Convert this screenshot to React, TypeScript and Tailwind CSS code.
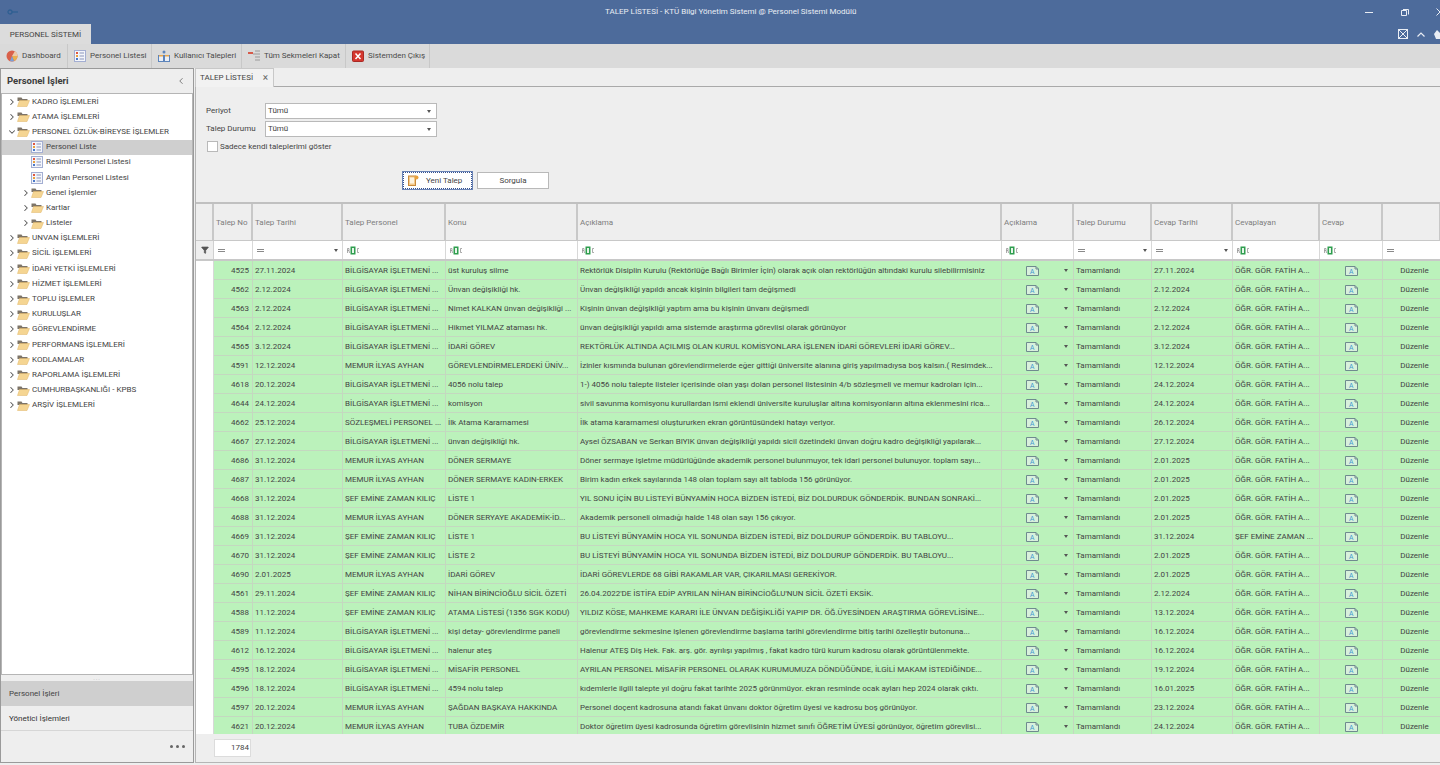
import { ChevronRight, ChevronDown, ChevronLeft, Filter } from "lucide-react"

const rows = [
  ["4525", "27.11.2024", "BİLGİSAYAR İŞLETMENİ ...", "üst kuruluş silme", "Rektörlük Disiplin Kurulu (Rektörlüğe Bağlı Birimler İçin) olarak açık olan rektörlüğün altındaki kurulu silebilirmisiniz", "27.11.2024", "ÖĞR. GÖR. FATİH A..."],
  ["4562", "2.12.2024", "BİLGİSAYAR İŞLETMENİ ...", "Ünvan değişikliği hk.", "Ünvan değişikliği yapıldı ancak kişinin bilgileri tam değişmedi", "2.12.2024", "ÖĞR. GÖR. FATİH A..."],
  ["4563", "2.12.2024", "BİLGİSAYAR İŞLETMENİ ...", "Nimet KALKAN ünvan değişikliği ...", "Kişinin ünvan değişikliği yaptım ama bu kişinin ünvanı değişmedi", "2.12.2024", "ÖĞR. GÖR. FATİH A..."],
  ["4564", "2.12.2024", "BİLGİSAYAR İŞLETMENİ ...", "Hikmet YILMAZ ataması hk.", "ünvan değişikliği yapıldı ama sistemde araştırma görevlisi olarak görünüyor", "2.12.2024", "ÖĞR. GÖR. FATİH A..."],
  ["4565", "3.12.2024", "BİLGİSAYAR İŞLETMENİ ...", "İDARİ GÖREV", "REKTÖRLÜK ALTINDA AÇILMIŞ OLAN KURUL KOMİSYONLARA İŞLENEN İDARİ GÖREVLERİ İDARİ GÖREV...", "3.12.2024", "ÖĞR. GÖR. FATİH A..."],
  ["4591", "12.12.2024", "MEMUR İLYAS AYHAN", "GÖREVLENDİRMELERDEKİ ÜNİV...", "İzinler kısmında bulunan görevlendirmelerde eğer gittiği üniversite alanına giriş yapılmadıysa boş kalsın.( Resimdek...", "12.12.2024", "ÖĞR. GÖR. FATİH A..."],
  ["4618", "20.12.2024", "BİLGİSAYAR İŞLETMENİ ...", "4056 nolu talep", "1-) 4056 nolu talepte listeler içerisinde olan yaşı dolan personel listesinin 4/b sözleşmeli ve memur kadroları için...", "24.12.2024", "ÖĞR. GÖR. FATİH A..."],
  ["4644", "24.12.2024", "BİLGİSAYAR İŞLETMENİ ...", "komisyon", "sivil savunma komisyonu kurullardan ismi eklendi üniversite kuruluşlar altına komisyonların altına eklenmesini rica...", "24.12.2024", "ÖĞR. GÖR. FATİH A..."],
  ["4662", "25.12.2024", "SÖZLEŞMELİ PERSONEL ...", "İlk Atama Kararnamesi", "İlk atama kararnamesi oluştururken ekran görüntüsündeki hatayı veriyor.", "26.12.2024", "ÖĞR. GÖR. FATİH A..."],
  ["4667", "27.12.2024", "BİLGİSAYAR İŞLETMENİ ...", "ünvan değişikliği hk.", "Aysel ÖZSABAN ve Serkan BIYIK ünvan değişikliği yapıldı sicil özetindeki ünvan doğru kadro değişikliği yapılarak...", "27.12.2024", "ÖĞR. GÖR. FATİH A..."],
  ["4686", "31.12.2024", "MEMUR İLYAS AYHAN", "DÖNER SERMAYE", "Döner sermaye işletme müdürlüğünde akademik personel bulunmuyor, tek idari personel bulunuyor. toplam sayı...", "2.01.2025", "ÖĞR. GÖR. FATİH A..."],
  ["4687", "31.12.2024", "MEMUR İLYAS AYHAN", "DÖNER SERMAYE KADIN-ERKEK", "Birim kadın erkek sayılarında 148 olan toplam sayı alt tabloda 156 görünüyor.", "2.01.2025", "ÖĞR. GÖR. FATİH A..."],
  ["4668", "31.12.2024", "ŞEF EMİNE ZAMAN KILIÇ", "LİSTE 1", "YIL SONU İÇİN BU LİSTEYİ BÜNYAMİN HOCA BİZDEN İSTEDİ, BİZ DOLDURDUK GÖNDERDİK. BUNDAN SONRAKİ...", "2.01.2025", "ÖĞR. GÖR. FATİH A..."],
  ["4688", "31.12.2024", "MEMUR İLYAS AYHAN", "DÖNER SERYAYE AKADEMİK-İD...", "Akademik personeli olmadığı halde 148 olan sayı 156 çıkıyor.", "2.01.2025", "ÖĞR. GÖR. FATİH A..."],
  ["4669", "31.12.2024", "ŞEF EMİNE ZAMAN KILIÇ", "LİSTE 1", "BU LİSTEYİ BÜNYAMİN HOCA YIL SONUNDA BİZDEN İSTEDİ, BİZ DOLDURUP GÖNDERDİK.  BU TABLOYU...", "31.12.2024", "ŞEF EMİNE ZAMAN ..."],
  ["4670", "31.12.2024", "ŞEF EMİNE ZAMAN KILIÇ", "LİSTE 2", "BU LİSTEYİ BÜNYAMİN HOCA YIL SONUNDA BİZDEN İSTEDİ, BİZ DOLDURUP GÖNDERDİK.  BU TABLOYU...", "2.01.2025", "ÖĞR. GÖR. FATİH A..."],
  ["4690", "2.01.2025", "MEMUR İLYAS AYHAN", "İDARİ GÖREV", "İDARİ GÖREVLERDE 68 GİBİ RAKAMLAR VAR, ÇIKARILMASI GEREKİYOR.", "2.01.2025", "ÖĞR. GÖR. FATİH A..."],
  ["4561", "29.11.2024", "ŞEF EMİNE ZAMAN KILIÇ", "NİHAN BİRİNCİOĞLU SİCİL ÖZETİ", "26.04.2022'DE İSTİFA EDİP AYRILAN NİHAN BİRİNCİOĞLU'NUN SİCİL ÖZETİ EKSİK.", "2.12.2024", "ÖĞR. GÖR. FATİH A..."],
  ["4588", "11.12.2024", "ŞEF EMİNE ZAMAN KILIÇ", "ATAMA LİSTESİ (1356 SGK KODU)", "YILDIZ KÖSE, MAHKEME KARARI İLE ÜNVAN DEĞİŞİKLİĞİ YAPIP DR. ÖĞ.ÜYESİNDEN ARAŞTIRMA GÖREVLİSİNE...", "13.12.2024", "ÖĞR. GÖR. FATİH A..."],
  ["4589", "11.12.2024", "BİLGİSAYAR İŞLETMENİ ...", "kişi detay- görevlendirme paneli", "görevlendirme sekmesine işlenen görevlendirme başlama tarihi görevlendirme bitiş tarihi özelleştir butonuna...", "16.12.2024", "ÖĞR. GÖR. FATİH A..."],
  ["4612", "16.12.2024", "BİLGİSAYAR İŞLETMENİ ...", "halenur ateş", "Halenur ATEŞ Diş Hek. Fak. arş. gör. ayrılışı yapılmış , fakat kadro türü kurum kadrosu olarak görüntülenmekte.", "16.12.2024", "ÖĞR. GÖR. FATİH A..."],
  ["4595", "18.12.2024", "BİLGİSAYAR İŞLETMENİ ...", "MİSAFİR PERSONEL", "AYRILAN PERSONEL MİSAFİR PERSONEL OLARAK KURUMUMUZA DÖNDÜĞÜNDE, İLGİLİ MAKAM İSTEDİĞİNDE...", "19.12.2024", "ÖĞR. GÖR. FATİH A..."],
  ["4596", "18.12.2024", "BİLGİSAYAR İŞLETMENİ ...", "4594 nolu talep", "kıdemlerle ilgili talepte yıl doğru fakat tarihte 2025 görünmüyor. ekran resminde ocak ayları hep 2024 olarak çıktı.", "16.01.2025", "ÖĞR. GÖR. FATİH A..."],
  ["4597", "20.12.2024", "MEMUR İLYAS AYHAN", "ŞAĞDAN BAŞKAYA HAKKINDA", "Personel doçent kadrosuna atandı fakat ünvanı doktor öğretim üyesi ve kadrosu boş görünüyor.", "23.12.2024", "ÖĞR. GÖR. FATİH A..."],
  ["4621", "20.12.2024", "MEMUR İLYAS AYHAN", "TUBA ÖZDEMİR", "Doktor öğretim üyesi kadrosunda öğretim görevlisinin hizmet sınıfı ÖĞRETİM ÜYESİ görünüyor, öğretim görevlisi...", "24.12.2024", "ÖĞR. GÖR. FATİH A..."],
]

const tree = [
  { label: "KADRO İŞLEMLERİ", level: 0, kind: "closed" },
  { label: "ATAMA İŞLEMLERİ", level: 0, kind: "closed" },
  { label: "PERSONEL ÖZLÜK-BİREYSE İŞLEMLER", level: 0, kind: "open" },
  { label: "Personel Liste", level: 1, kind: "list", selected: true },
  { label: "Resimli Personel Listesi", level: 1, kind: "list" },
  { label: "Ayrılan Personel Listesi", level: 1, kind: "list" },
  { label: "Genel İşlemler", level: 1, kind: "closed" },
  { label: "Kartlar", level: 1, kind: "closed" },
  { label: "Listeler", level: 1, kind: "closed" },
  { label: "UNVAN İŞLEMLERİ", level: 0, kind: "closed" },
  { label: "SİCİL İŞLEMLERİ", level: 0, kind: "closed" },
  { label: "İDARİ YETKİ İŞLEMLERİ", level: 0, kind: "closed" },
  { label: "HİZMET İŞLEMLERİ", level: 0, kind: "closed" },
  { label: "TOPLU İŞLEMLER", level: 0, kind: "closed" },
  { label: "KURULUŞLAR", level: 0, kind: "closed" },
  { label: "GÖREVLENDİRME", level: 0, kind: "closed" },
  { label: "PERFORMANS İŞLEMLERİ", level: 0, kind: "closed" },
  { label: "KODLAMALAR", level: 0, kind: "closed" },
  { label: "RAPORLAMA İŞLEMLERİ", level: 0, kind: "closed" },
  { label: "CUMHURBAŞKANLIĞI - KPBS", level: 0, kind: "closed" },
  { label: "ARŞİV İŞLEMLERİ", level: 0, kind: "closed" },
]

const gridCols = "grid grid-cols-[18px_39px_90px_103px_132px_424px_72px_78px_81px_87px_63px_58px]"

function FolderIcon() {
  return (
    <svg width="13" height="11" viewBox="0 0 13 11" className="shrink-0">
      <path d="M0.5 1.5h4l1 1.5h5v2h-10z" fill="#7d7468" />
      <path d="M0.5 10.5l2-6h10l-2.5 6z" fill="#f5d592" stroke="#e0b566" strokeWidth="0.5" />
    </svg>
  )
}

function ListIcon() {
  return (
    <svg width="12" height="12" viewBox="0 0 12 12" className="shrink-0">
      <rect x="0.5" y="0.5" width="11" height="11" fill="#f4f6fb" stroke="#a3aed2" />
      <rect x="2" y="2" width="2" height="2" fill="#e0563f" />
      <rect x="2" y="5" width="2" height="2" fill="#e8a03c" />
      <rect x="2" y="8" width="2" height="2" fill="#4a78c8" />
      <path d="M5.5 3h4.5M5.5 6h4.5M5.5 9h4.5" stroke="#8a95bb" />
    </svg>
  )
}

function FilterAbc() {
  return (
    <svg width="13" height="9" viewBox="0 0 13 9">
      <path d="M0.5 7V2.5h1.5v2H0.5M2 4.5l0.5 2.5" stroke="#888" strokeWidth="0.7" fill="none" />
      <rect x="3.5" y="0.5" width="5" height="8" fill="#2f9e4f" />
      <rect x="5" y="2" width="2" height="5" fill="#e8f5ea" />
      <path d="M12 2.5h-1.5v4H12" stroke="#888" strokeWidth="0.7" fill="none" />
    </svg>
  )
}

function MemoIcon() {
  return (
    <svg width="13" height="10" viewBox="0 0 13 10" className="shrink-0">
      <path d="M0.5 0.5h9.5l2.5 2.5v6.5h-12z" fill="#d8f0dc" stroke="#6f8a8f" />
      <path d="M10 0.5v2.5h2.5" fill="none" stroke="#6f8a8f" />
      <text x="4" y="7.5" fontSize="6.5" fill="#3f9bd0" fontFamily="'Liberation Sans', sans-serif">A</text>
    </svg>
  )
}

function EqualSign() {
  return <span className="block w-[7px] h-[3px] border-y border-[#8a8a8a]" />
}

function SmallArrow() {
  return <span className="w-0 h-0 shrink-0 border-x-[2.5px] border-x-transparent border-t-[3px] border-t-[#555]" />
}

function ToolbarItem({ icon, label, width }: { icon: React.ReactNode; label: string; width: string }) {
  return (
    <div className={`flex items-center gap-[4px] h-full pl-[6px] border-r border-[#c8c8c8] whitespace-nowrap ${width}`}>
      {icon}
      <span>{label}</span>
    </div>
  )
}

function TreeRow({ item }: { item: (typeof tree)[number] }) {
  const left = item.level === 0 ? "pl-[5px]" : "pl-[19px]"
  return (
    <div className={`flex items-center h-[15.2px] ${left} ${item.selected ? "bg-[#cfcfcf]" : ""}`}>
      <span className="w-[10px] shrink-0">
        {item.kind === "closed" && <ChevronRight size={10} strokeWidth={2.5} color="#555" />}
        {item.kind === "open" && <ChevronDown size={10} strokeWidth={2.5} color="#555" />}
      </span>
      {item.kind === "list" ? <ListIcon /> : <FolderIcon />}
      <span className={`whitespace-nowrap ${item.kind === "list" ? "ml-[3px]" : "ml-[2px]"}`}>{item.label}</span>
    </div>
  )
}

function ComboBox() {
  return (
    <div className="flex items-center justify-between w-[172px] h-[16px] bg-white border border-[#b9b9b9] pl-[2px] pr-[5px]">
      <span>Tümü</span>
      <SmallArrow />
    </div>
  )
}

export default function App() {
  const cell = "flex items-center px-[2px] pt-px bg-[#bbf2bb] border-r border-b border-[#c4d8c0] overflow-hidden whitespace-nowrap"
  const head = "flex items-center px-[2px] pt-px border-r-2 border-[#c8c8c8] text-[#7d7d7d] overflow-hidden whitespace-nowrap"
  const filterCell = "flex items-center justify-between px-[4px] border-r border-[#d8d8d8] bg-white"

  return (
    <div className="w-[1440px] h-[765px] overflow-hidden flex flex-col bg-[#eeeeee] text-[#444] text-[8px] font-['Roboto','Liberation_Sans',sans-serif]">
      {/* title bar */}
      <div className="h-[24px] shrink-0 bg-[#4d6b9b] flex items-center text-[#e9edf4] pl-[7px]">
        <svg width="12" height="6" viewBox="0 0 12 6" className="shrink-0">
          <circle cx="3" cy="3" r="2" fill="none" stroke="#2f5f92" strokeWidth="1.3" />
          <path d="M5 3h6" stroke="#2f5f92" strokeWidth="1.3" />
        </svg>
        <div className="ml-[586px] w-[248px] shrink-0 whitespace-nowrap">TALEP LİSTESİ - KTÜ Bilgi Yönetim Sistemi @ Personel Sistemi Modülü</div>
        <div className="ml-[512px] w-[8px] h-px shrink-0 bg-[#e9edf4]" />
        <svg width="8" height="8" viewBox="0 0 8 8" className="ml-[28px] shrink-0">
          <path d="M2 1.5h5.5v5M0.5 2.5h5v5h-5z" fill="none" stroke="#e9edf4" />
        </svg>
        <svg width="8" height="8" viewBox="0 0 8 8" className="ml-[27px] shrink-0">
          <path d="M0.5 0.5l7 7M7.5 0.5l-7 7" stroke="#e9edf4" />
        </svg>
      </div>
      {/* tab strip */}
      <div className="h-[20px] shrink-0 bg-[#4d6b9b] flex items-stretch">
        <div className="w-[91px] bg-[#dcdcdc] flex items-center justify-center pt-px text-[#444] whitespace-nowrap">PERSONEL SİSTEMİ</div>
        <div className="flex-1 flex items-center justify-end gap-[9px]">
          <svg width="10" height="10" viewBox="0 0 10 10">
            <rect x="0.5" y="0.5" width="9" height="9" fill="none" stroke="#e9edf4" />
            <path d="M1 1l8 8M9 1l-8 8" stroke="#e9edf4" />
          </svg>
          <svg width="8" height="5" viewBox="0 0 8 5">
            <path d="M0.5 4.5L4 1l3.5 3.5" fill="none" stroke="#e9edf4" strokeWidth="1.2" />
          </svg>
          <svg width="6" height="10" viewBox="0 0 6 10">
            <path d="M0 5l3-4 3 3v6H2z" fill="#e9edf4" />
          </svg>
        </div>
      </div>
      {/* toolbar */}
      <div className="h-[24px] shrink-0 bg-[#dadada] flex items-center text-[#4a4a4a]">
        <ToolbarItem
          width="w-[68px]"
          label="Dashboard"
          icon={
            <svg width="12" height="12" viewBox="0 0 12 12">
              <circle cx="6" cy="6" r="5.5" fill="#d9604a" />
              <path d="M6 6l3-5a5.5 5.5 0 0 1 2.5 5z" fill="#ecc9a8" />
              <path d="M6 6h5.5a5.5 5.5 0 0 1-3.5 5z" fill="#e9b04e" />
              <path d="M6 6l2 5a5.5 5.5 0 0 1-4 0z" fill="#7aa0d8" />
            </svg>
          }
        />
        <ToolbarItem width="w-[84px]" label="Personel Listesi" icon={<ListIcon />} />
        <ToolbarItem
          width="w-[90px]"
          label="Kullanıcı Talepleri"
          icon={
            <svg width="12" height="12" viewBox="0 0 12 12">
              <rect x="0.5" y="5.5" width="5" height="6" fill="#e9eef6" stroke="#5c84bb" />
              <rect x="6.5" y="5.5" width="5" height="6" fill="#e9eef6" stroke="#5c84bb" />
              <path d="M1 5h4v1.5H1zM7 5h4v1.5H7z" fill="#e8a64c" />
              <circle cx="6" cy="2" r="1.5" fill="#5c84bb" />
            </svg>
          }
        />
        <ToolbarItem
          width="w-[104px]"
          label="Tüm Sekmeleri Kapat"
          icon={
            <svg width="12" height="12" viewBox="0 0 12 12">
              <path d="M0 3h5" stroke="#d65a4a" strokeWidth="2" />
              <path d="M7 1h5M5 4h7M7 7h5M7 10h5" stroke="#9a9a9a" />
            </svg>
          }
        />
        <ToolbarItem
          width="w-[84px]"
          label="Sistemden Çıkış"
          icon={
            <svg width="12" height="12" viewBox="0 0 12 12">
              <rect x="0.5" y="1" width="11" height="10.5" rx="1" fill="#d5372f" stroke="#a82a25" />
              <path d="M3.5 3.5l5 5.5M8.5 3.5l-5 5.5" stroke="#fff" strokeWidth="1.5" />
            </svg>
          }
        />
      </div>
      <div className="flex-1 flex min-h-0 pb-[2px]">
        {/* left panel */}
        <div className="w-[194px] shrink-0 flex flex-col border border-[#9a9a9a]">
          <div className="h-[24px] shrink-0 flex items-center justify-between pl-[6px] pr-[7px] font-bold text-[9.5px] text-[#3c3c3c]">
            Personel İşleri
            <ChevronLeft size={10} color="#666" />
          </div>
          <div className="flex-1 bg-white border border-[#b5b5b5]">
            {tree.map((item) => (
              <TreeRow key={item.label} item={item} />
            ))}
          </div>
          <div className="h-[6px] shrink-0 flex items-center justify-center text-[#aaa] text-[6px] tracking-[1px] leading-none">...</div>
          <div className="h-[25px] shrink-0 bg-[#cfcfcf] flex items-center pl-[8px]">Personel İşleri</div>
          <div className="h-[25px] shrink-0 flex items-center pl-[8px] pt-px border-b border-[#d6d6d6] text-[#333]">Yönetici İşlemleri</div>
          <div className="h-[31px] shrink-0 flex items-center justify-end gap-[3px] pr-[8px]">
            <span className="w-[3px] h-[3px] rounded-full bg-[#666]" />
            <span className="w-[3px] h-[3px] rounded-full bg-[#666]" />
            <span className="w-[3px] h-[3px] rounded-full bg-[#666]" />
          </div>
        </div>
        {/* main */}
        <div className="ml-px flex-1 min-w-0 flex flex-col">
          <div className="h-[19px] shrink-0 flex border-b border-[#a9a9a9]">
            <div className="w-[79px] h-[19px] bg-[#f2f2f2] border-x border-t border-[#c8c8c8] flex items-center justify-between pl-[4px] pr-[5px]">
              TALEP LİSTESİ
              <span className="text-[10px] text-[#666] leading-none">×</span>
            </div>
          </div>
          <div className="flex-1 min-h-0 flex flex-col border-l border-b border-[#b5b5b5]">
            {/* filters */}
            <div className="h-[115px] shrink-0 pt-[16px] pl-[10px] flex flex-col">
              <div className="flex items-center h-[16px] mb-[2px]">
                <span className="w-[59px] whitespace-nowrap">Periyot</span>
                <ComboBox />
              </div>
              <div className="flex items-center h-[16px]">
                <span className="w-[59px] whitespace-nowrap">Talep Durumu</span>
                <ComboBox />
              </div>
              <div className="flex items-center mt-[3px] ml-px">
                <span className="w-[11px] h-[11px] bg-white border border-[#b9b9b9] mr-[2px]" />
                <span className="pt-px">Sadece kendi taleplerimi göster</span>
              </div>
              <div className="flex ml-[197px] mt-[19px] gap-[5px]">
                <div className="w-[69px] h-[17px] bg-white border border-dotted border-[#33508f] outline outline-1 outline-[#6a83b5] flex items-center pl-[4px] gap-[7px]">
                  <svg width="11" height="11" viewBox="0 0 11 11" className="shrink-0">
                    <rect x="0.5" y="1" width="7" height="9.5" fill="#f3c98a" stroke="#c98a3a" />
                    <rect x="2" y="2.5" width="4" height="6" fill="#fdf3df" />
                    <circle cx="8.5" cy="2.5" r="2" fill="#e8a03c" />
                  </svg>
                  Yeni Talep
                </div>
                <div className="w-[72px] h-[17px] bg-white border border-[#b9b9b9] flex items-center justify-center">Sorgula</div>
              </div>
            </div>
            {/* grid */}
            <div className="flex-1 min-h-0 overflow-hidden bg-white border-t-2 border-[#c0c0c0]">
              <div className={`${gridCols} h-[37px] bg-[#eeeeee] border-b border-[#c8c8c8]`}>
                <div className="border-r-2 border-[#c8c8c8]" />
                {["Talep No", "Talep Tarihi", "Talep Personel", "Konu", "Açıklama", "Açıklama", "Talep Durumu", "Cevap Tarihi", "Cevaplayan", "Cevap", ""].map((h, i) => (
                  <div key={i} className={head}>{h}</div>
                ))}
              </div>
              <div className={`${gridCols} h-[20px] border-b-2 border-[#c8c8c8]`}>
                <div className="flex items-center justify-center bg-[#eeeeee] border-r border-[#d0d0d0]">
                  <Filter size={8} fill="#555" color="#555" />
                </div>
                <div className={filterCell}><EqualSign /></div>
                <div className={filterCell}><EqualSign /><SmallArrow /></div>
                <div className={filterCell}><FilterAbc /></div>
                <div className={filterCell}><FilterAbc /></div>
                <div className={filterCell}><FilterAbc /></div>
                <div className={filterCell}><FilterAbc /></div>
                <div className={filterCell}><EqualSign /><SmallArrow /></div>
                <div className={filterCell}><EqualSign /><SmallArrow /></div>
                <div className={filterCell}><FilterAbc /></div>
                <div className={filterCell}><FilterAbc /></div>
                <div className={filterCell}><EqualSign /></div>
              </div>
              {rows.map((r) => (
                <div key={r[0]} className={`${gridCols} h-[19px]`}>
                  <div className="bg-white border-r border-[#d8d8d8]" />
                  <div className={`${cell} justify-end pr-[3px]`}>{r[0]}</div>
                  <div className={cell}>{r[1]}</div>
                  <div className={cell}>{r[2]}</div>
                  <div className={cell}>{r[3]}</div>
                  <div className={cell}>{r[4]}</div>
                  <div className={`${cell} justify-between pl-[24px] pr-[5px]`}><MemoIcon /><SmallArrow /></div>
                  <div className={cell}>Tamamlandı</div>
                  <div className={cell}>{r[5]}</div>
                  <div className={cell}>{r[6]}</div>
                  <div className={`${cell} justify-center`}><MemoIcon /></div>
                  <div className={`${cell} justify-center pl-[8px]`}>Düzenle</div>
                </div>
              ))}
            </div>
            {/* footer */}
            <div className="h-[28px] shrink-0 bg-[#eeeeee] flex items-center pl-[18px]">
              <div className="w-[37px] h-[18px] bg-white border border-[#dcdcdc] flex items-center justify-end pr-px">1784</div>
            </div>
          </div>
        </div>
      </div>
    </div>
  )
}
